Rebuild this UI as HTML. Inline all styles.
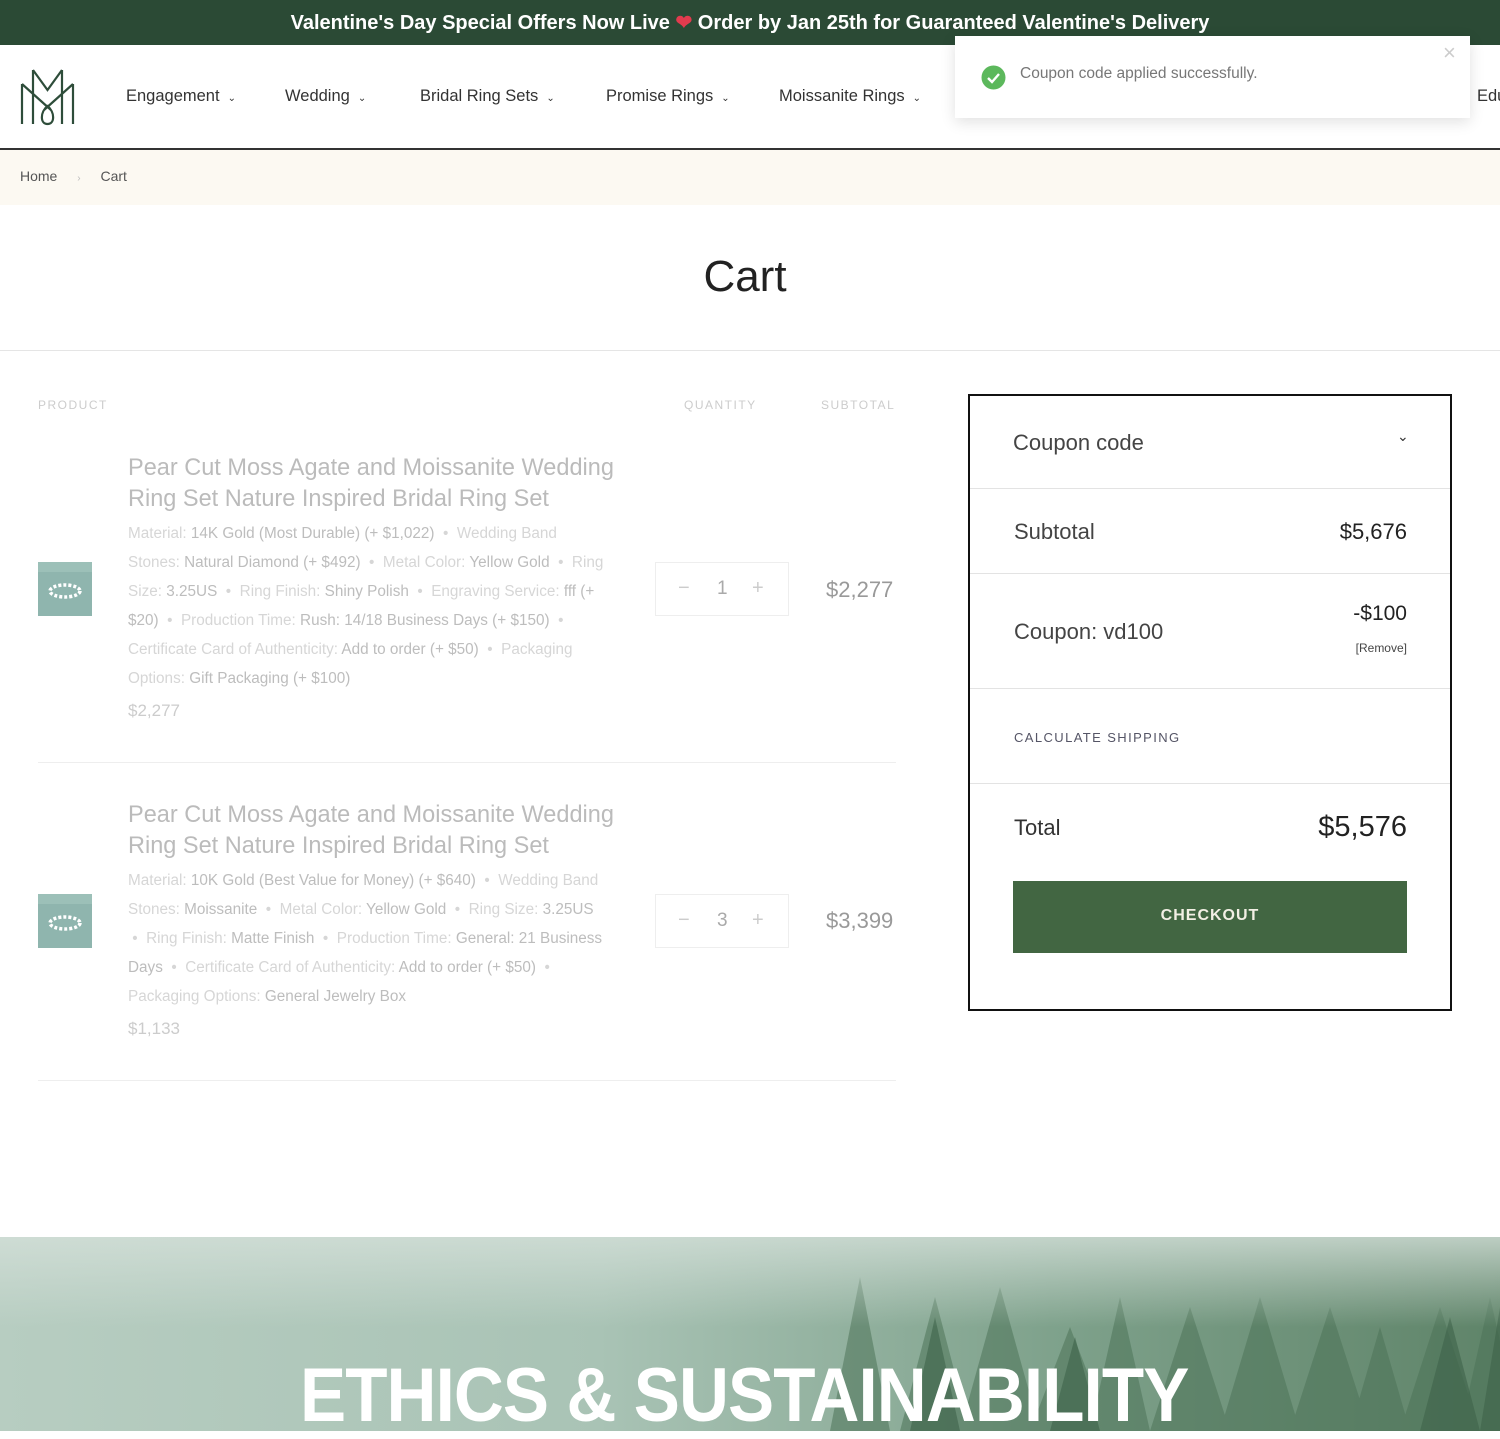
<!DOCTYPE html>
<html><head><meta charset="utf-8">
<style>
*{margin:0;padding:0;box-sizing:border-box}
html,body{width:1500px;height:1431px;overflow:hidden;background:#fff;font-family:"Liberation Sans",sans-serif;color:#222}
.a{position:absolute;white-space:nowrap}
.n{transform:scaleX(.88);transform-origin:left center}
.top{left:0;top:0;width:1500px;height:45px;background:#2b4a35}
.nav{font-size:16.5px;color:#333;top:87px}
.nav span{font-size:10px;margin-left:8px}
.meta{font-size:15.3px;color:#d6d6d6;left:128px}
.meta b{font-weight:normal;color:#bdbdbd}
.ttl{font-size:24px;color:#bbb;left:128px;font-weight:300;transform:scaleX(.98);transform-origin:left center}
.qty{width:134px;height:54px;border:1px solid #eee;left:655px}
.hr{height:1px;background:#eee}
</style></head><body>
<div class="a top"></div>
<div class="a" style="left:0;width:1500px;top:10px;text-align:center;color:#fff;font-size:20px;font-weight:bold;letter-spacing:0px">Valentine's Day Special Offers Now Live <span style="color:#e23b4e">&#10084;</span> Order by Jan 25th for Guaranteed Valentine's Delivery</div>

<svg class="a" style="left:18px;top:66px" width="60" height="62" viewBox="0 0 60 62" fill="none" stroke="#2e4d3a" stroke-width="2.2">
<path d="M4 18V58M55 18V58M15 4V58M44 4V58M15 4L29.5 24L44 4M4 18L33 44M55 18L26 44M29.5 40C22 46 22 58 29.5 58C37 58 37 46 29.5 40Z"/>
</svg>
<div class="a nav" style="left:126px">Engagement<span>&#8964;</span></div>
<div class="a nav" style="left:285px">Wedding<span>&#8964;</span></div>
<div class="a nav" style="left:420px">Bridal Ring Sets<span>&#8964;</span></div>
<div class="a nav" style="left:606px">Promise Rings<span>&#8964;</span></div>
<div class="a nav" style="left:779px">Moissanite Rings<span>&#8964;</span></div>
<div class="a nav" style="left:1477px">Edu</div>
<div class="a" style="left:0;top:148px;width:1500px;height:2px;background:#333"></div>
<div class="a" style="left:0;top:150px;width:1500px;height:55px;background:#fcf9f2"></div>
<div class="a" style="left:20px;top:168px;font-size:14px;color:#555">Home <span style="color:#bbb;margin:0 16px 0 16px;font-size:10px">&#8250;</span> Cart</div>

<div class="a" style="left:955px;top:36px;width:515px;height:82px;background:#fff;box-shadow:0 4px 14px rgba(0,0,0,.12)"></div>
<svg class="a" style="left:981px;top:65px" width="25" height="25" viewBox="0 0 25 25"><circle cx="12.5" cy="12.5" r="12" fill="#5cb85c"/><path d="M7 13l4 4 7-8" stroke="#fff" stroke-width="2.4" fill="none"/></svg>
<div class="a" style="left:1020px;top:65px;font-size:15.5px;color:#777">Coupon code applied successfully.</div>
<div class="a" style="left:1443px;top:40px;font-size:22px;color:#ccc">&#215;</div>

<div class="a" style="left:0;width:1490px;top:252px;text-align:center;font-size:44px;color:#222">Cart</div>
<div class="a hr" style="left:0;top:350px;width:1500px;background:#e5e5e5"></div>

<div class="a" style="left:38px;top:398px;font-size:12px;color:#ccc;letter-spacing:1.5px">PRODUCT</div>
<div class="a" style="left:684px;top:398px;font-size:12px;color:#ccc;letter-spacing:1.5px">QUANTITY</div>
<div class="a" style="left:821px;top:398px;font-size:12px;color:#ccc;letter-spacing:1.5px">SUBTOTAL</div>

<!-- item 1 -->
<svg class="a" style="left:38px;top:562px" width="54" height="54"><rect width="54" height="54" fill="#8fb5ae"/><rect width="54" height="10" fill="#9cc0b8"/><ellipse cx="27" cy="29" rx="15" ry="6" fill="none" stroke="#fff" stroke-width="3.5" stroke-dasharray="3 2"/></svg>
<div class="a ttl" style="top:454px">Pear Cut Moss Agate and Moissanite Wedding</div>
<div class="a ttl" style="top:485px">Ring Set Nature Inspired Bridal Ring Set</div>
<div class="a meta" style="top:525px">Material: <b>14K Gold (Most Durable) (+ $1,022)</b> &nbsp;•&nbsp; Wedding Band</div>
<div class="a meta" style="top:554px">Stones: <b>Natural Diamond (+ $492)</b> &nbsp;•&nbsp; Metal Color: <b>Yellow Gold</b> &nbsp;•&nbsp; Ring</div>
<div class="a meta" style="top:583px">Size: <b>3.25US</b> &nbsp;•&nbsp; Ring Finish: <b>Shiny Polish</b> &nbsp;•&nbsp; Engraving Service: <b>fff (+</b></div>
<div class="a meta" style="top:612px"><b>$20)</b> &nbsp;•&nbsp; Production Time: <b>Rush: 14/18 Business Days (+ $150)</b> &nbsp;•</div>
<div class="a meta" style="top:641px">Certificate Card of Authenticity: <b>Add to order (+ $50)</b> &nbsp;•&nbsp; Packaging</div>
<div class="a meta" style="top:670px">Options: <b>Gift Packaging (+ $100)</b></div>
<div class="a" style="left:128px;top:701px;font-size:17px;color:#ccc">$2,277</div>
<div class="a qty" style="top:562px"></div>
<div class="a" style="left:678px;top:577px;font-size:20px;color:#ccc">&#8722;</div>
<div class="a" style="left:717px;top:578px;font-size:19px;color:#aaa">1</div>
<div class="a" style="left:752px;top:577px;font-size:20px;color:#ccc">+</div>
<div class="a" style="left:826px;top:577px;font-size:22px;color:#999">$2,277</div>
<div class="a hr" style="left:38px;top:762px;width:858px"></div>

<!-- item 2 -->
<svg class="a" style="left:38px;top:894px" width="54" height="54"><rect width="54" height="54" fill="#8fb5ae"/><rect width="54" height="10" fill="#9cc0b8"/><ellipse cx="27" cy="29" rx="15" ry="6" fill="none" stroke="#fff" stroke-width="3.5" stroke-dasharray="3 2"/></svg>
<div class="a ttl" style="top:801px">Pear Cut Moss Agate and Moissanite Wedding</div>
<div class="a ttl" style="top:832px">Ring Set Nature Inspired Bridal Ring Set</div>
<div class="a meta" style="top:872px">Material: <b>10K Gold (Best Value for Money) (+ $640)</b> &nbsp;•&nbsp; Wedding Band</div>
<div class="a meta" style="top:901px">Stones: <b>Moissanite</b> &nbsp;•&nbsp; Metal Color: <b>Yellow Gold</b> &nbsp;•&nbsp; Ring Size: <b>3.25US</b></div>
<div class="a meta" style="top:930px">&nbsp;•&nbsp; Ring Finish: <b>Matte Finish</b> &nbsp;•&nbsp; Production Time: <b>General: 21 Business</b></div>
<div class="a meta" style="top:959px"><b>Days</b> &nbsp;•&nbsp; Certificate Card of Authenticity: <b>Add to order (+ $50)</b> &nbsp;•</div>
<div class="a meta" style="top:988px">Packaging Options: <b>General Jewelry Box</b></div>
<div class="a" style="left:128px;top:1019px;font-size:17px;color:#ccc">$1,133</div>
<div class="a qty" style="top:894px"></div>
<div class="a" style="left:678px;top:909px;font-size:20px;color:#ccc">&#8722;</div>
<div class="a" style="left:717px;top:910px;font-size:19px;color:#aaa">3</div>
<div class="a" style="left:752px;top:909px;font-size:20px;color:#ccc">+</div>
<div class="a" style="left:826px;top:908px;font-size:22px;color:#999">$3,399</div>
<div class="a hr" style="left:38px;top:1080px;width:858px"></div>

<!-- totals box -->
<div class="a" style="left:968px;top:394px;width:484px;height:617px;border:2px solid #111"></div>
<div class="a" style="left:1013px;top:430px;font-size:22px;color:#444">Coupon code</div>
<div class="a" style="left:1397px;top:428px;font-size:14px;color:#333">&#8964;</div>
<div class="a hr" style="left:970px;top:488px;width:480px;background:#e3e3e3"></div>
<div class="a" style="left:1014px;top:519px;font-size:22px;color:#444">Subtotal</div>
<div class="a" style="left:1300px;width:107px;text-align:right;top:519px;font-size:22px;color:#222">$5,676</div>
<div class="a hr" style="left:970px;top:573px;width:480px;background:#e3e3e3"></div>
<div class="a" style="left:1014px;top:619px;font-size:22px;color:#444">Coupon: vd100</div>
<div class="a" style="left:1300px;width:107px;text-align:right;top:602px;font-size:21px;color:#222">-$100</div>
<div class="a" style="left:1300px;width:107px;text-align:right;top:641px;font-size:12px;color:#444">[Remove]</div>
<div class="a hr" style="left:970px;top:688px;width:480px;background:#e3e3e3"></div>
<div class="a" style="left:1014px;top:730px;font-size:13px;color:#556;letter-spacing:1.4px">CALCULATE SHIPPING</div>
<div class="a hr" style="left:970px;top:783px;width:480px;background:#e3e3e3"></div>
<div class="a" style="left:1014px;top:815px;font-size:22px;color:#333">Total</div>
<div class="a" style="left:1280px;width:127px;text-align:right;top:811px;font-size:29px;color:#222">$5,576</div>
<div class="a" style="left:1013px;top:881px;width:394px;height:72px;background:#426642"></div>
<div class="a" style="left:1013px;width:394px;text-align:center;top:907px;font-size:16px;font-weight:bold;color:#f2efe4;letter-spacing:1px">CHECKOUT</div>

<!-- footer banner -->
<div class="a" style="left:0;top:1237px;width:1500px;height:194px;background:linear-gradient(90deg,#b7cdc1 0%,#a9c3b5 40%,#7fa28c 70%,#5f8469 100%)"></div>
<svg class="a" style="left:0;top:1237px" width="1500" height="194">
<defs><linearGradient id="f" x1="0" y1="0" x2="0" y2="1"><stop offset="0" stop-color="#d4e0d9" stop-opacity=".8"/><stop offset="1" stop-color="#d4e0d9" stop-opacity="0"/></linearGradient></defs>
<g fill="#4d7358" opacity=".55">
<path d="M830 194L860 40L890 194ZM900 194L935 60L970 194ZM960 194L1000 50L1040 194ZM1030 194L1070 90L1110 194ZM1090 194L1120 60L1150 194ZM1150 194L1190 70L1230 194ZM1220 194L1260 60L1300 194ZM1290 194L1330 70L1370 194ZM1350 194L1380 90L1410 194ZM1400 194L1440 70L1480 194ZM1460 194L1490 60L1520 194Z"/>
</g>
<g fill="#3e6349" opacity=".6"><path d="M910 194L935 80L960 194ZM1050 194L1075 100L1100 194ZM1420 194L1450 80L1480 194ZM1480 194L1500 70L1520 194Z"/></g>
<rect width="1500" height="90" fill="url(#f)"/>
</svg>
<div class="a" style="left:300px;top:1352px;font-size:76px;font-weight:bold;color:#fff;letter-spacing:-1px;transform:scaleX(.91);transform-origin:left top">ETHICS &amp; SUSTAINABILITY</div>
</body></html>
